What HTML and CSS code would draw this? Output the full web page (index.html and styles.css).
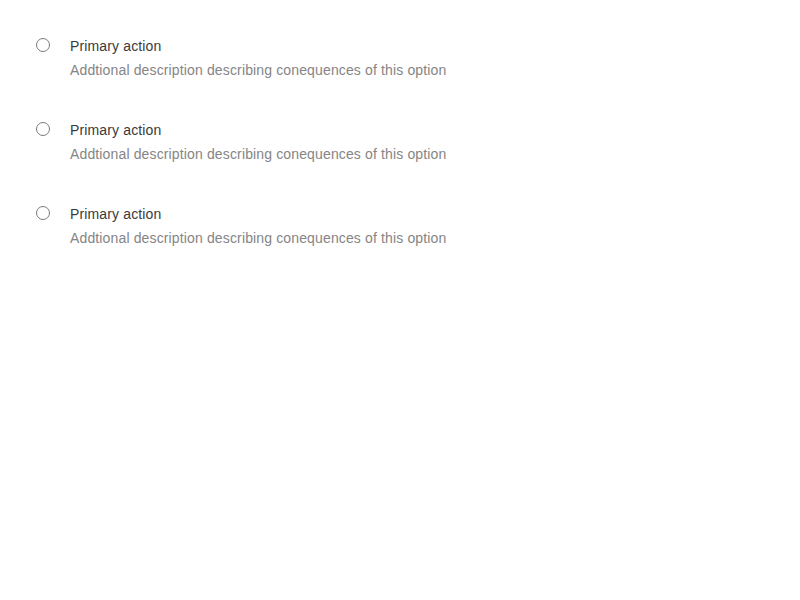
FILE: index.html
```html
<!DOCTYPE html>
<html>
<head>
<meta charset="utf-8">
<link rel="stylesheet" href="styles.css">
</head>
<body>
<div class="list">
  <label class="option">
    <span class="radio"></span>
    <span class="text">
      <span class="title">Primary action</span>
      <span class="desc">Addtional description describing conequences of this option</span>
    </span>
  </label>
  <label class="option">
    <span class="radio"></span>
    <span class="text">
      <span class="title">Primary action</span>
      <span class="desc">Addtional description describing conequences of this option</span>
    </span>
  </label>
  <label class="option">
    <span class="radio"></span>
    <span class="text">
      <span class="title">Primary action</span>
      <span class="desc">Addtional description describing conequences of this option</span>
    </span>
  </label>
</div>
</body>
</html>
```
FILE: styles.css
```css
html, body {
  margin: 0;
  padding: 0;
  background: #fff;
}
body {
  font-family: "Liberation Sans", Arial, sans-serif;
  font-size: 14px;
}
.list {
  display: flex;
  flex-direction: column;
  gap: 36px;
  padding: 34px 0 0 36px;
}
.option {
  display: flex;
  align-items: flex-start;
  gap: 20px;
}
.radio {
  flex: none;
  box-sizing: border-box;
  width: 14px;
  height: 14px;
  margin-top: 4px;
  border: 1px solid #7a7a7a;
  border-radius: 50%;
  background: #fff;
}
.text {
  display: flex;
  flex-direction: column;
  line-height: 24px;
  letter-spacing: 0.14px;
}
.title {
  color: #3a3a3a;
}
.desc {
  color: #858585;
}
```
